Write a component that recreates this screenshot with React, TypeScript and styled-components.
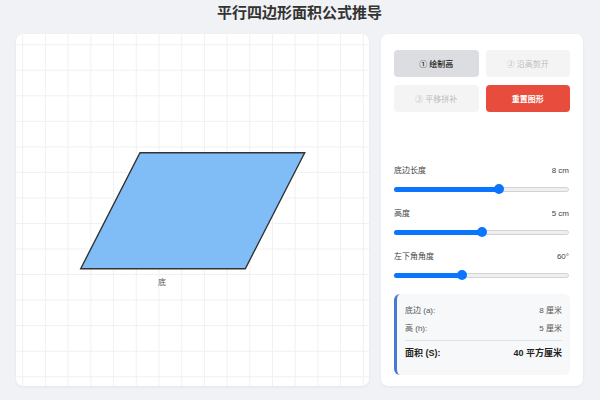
import React from "react";
import styled, { createGlobalStyle } from "styled-components";

const Global = createGlobalStyle`
  html, body { margin: 0; padding: 0; background: #f0f2f5; }
  body { font-family: "Liberation Sans", "Noto Sans CJK SC", sans-serif; }
  * { box-sizing: border-box; }
`;

const Page = styled.div`
  width: 600px;
  height: 400px;
  padding: 3px 17px 0 16px;
  display: flex;
  flex-direction: column;
`;

const Title = styled.h1`
  margin: 0 0 11px;
  height: 20px;
  line-height: 19px;
  font-size: 15px;
  font-weight: 700;
  color: #333;
  text-align: center;
`;

const Main = styled.div`
  display: flex;
  gap: 12px;
  height: 352px;
`;

const CanvasCard = styled.div`
  width: 353px;
  height: 352px;
  background: #fff;
  border-radius: 7px;
  box-shadow: 0 1px 3px rgba(0, 0, 0, 0.06);
  overflow: hidden;
`;

const Panel = styled.div`
  width: 202px;
  background: #fff;
  border-radius: 7px;
  box-shadow: 0 1px 3px rgba(0, 0, 0, 0.06);
  padding: 16px 13px 11px;
  display: flex;
  flex-direction: column;
`;

const ButtonGrid = styled.div`
  display: grid;
  grid-template-columns: 1fr 1fr;
  column-gap: 7px;
  row-gap: 8px;
`;

type Variant = "active" | "disabled" | "danger";

const StepButton = styled.button<{ $variant: Variant }>`
  height: 27px;
  border: none;
  border-radius: 4px;
  font-family: inherit;
  font-size: 8px;
  padding: 0;
  background: ${(p) =>
    p.$variant === "active" ? "#dcdde0" : p.$variant === "danger" ? "#e74c3c" : "#f4f4f5"};
  color: ${(p) =>
    p.$variant === "active" ? "#222" : p.$variant === "danger" ? "#fff" : "#bdbdc0"};
  font-weight: ${(p) => (p.$variant === "danger" ? 700 : p.$variant === "active" ? 500 : 400)};
`;

const Divider = styled.div`
  height: 1px;
  background: #ebecee;
  margin-top: 26px;
`;

const Sliders = styled.div`
  margin-top: 28px;
  display: flex;
  flex-direction: column;
  gap: 15px;
`;

const SliderGroup = styled.div`
  display: flex;
  flex-direction: column;
  gap: 8px;
`;

const SliderLabel = styled.div`
  display: flex;
  justify-content: space-between;
  font-size: 8px;
  line-height: 10px;
  color: #444;
  padding-right: 1px;
`;

const TrackBox = styled.div`
  position: relative;
  height: 10px;
  display: flex;
  align-items: center;
  padding-right: 1px;
`;

const Track = styled.div`
  position: relative;
  width: 100%;
  height: 5px;
  border-radius: 3px;
  background: #efeff0;
  border: 1px solid #d2d3d6;
`;

const Fill = styled.div`
  position: absolute;
  left: -1px;
  top: -1px;
  bottom: -1px;
  border-radius: 3px;
  background: #0a75ff;
`;

const Thumb = styled.div`
  position: absolute;
  top: 50%;
  width: 10px;
  height: 10px;
  margin: -5px 0 0 -5px;
  border-radius: 50%;
  background: #0a75ff;
`;

const Results = styled.div`
  margin-top: 14px;
  background: #f7f8fa;
  border-left: 3px solid #4a7bd3;
  border-radius: 6px;
  padding: 11px 8px 16px;
  display: flex;
  flex-direction: column;
`;

const ResultRow = styled.div<{ $total?: boolean }>`
  display: flex;
  justify-content: space-between;
  font-size: ${(p) => (p.$total ? "9px" : "8px")};
  line-height: 12px;
  color: ${(p) => (p.$total ? "#222" : "#555")};
  font-weight: ${(p) => (p.$total ? 700 : 400)};
  margin-top: ${(p) => (p.$total ? "6px" : "0")};
  & + & {
    margin-top: 6px;
  }
`;

const ResultDivider = styled.div`
  height: 1px;
  background: #e2e3e6;
  margin-top: 5px;
`;

const W = 353;
const H = 352;
const vLines = Array.from({ length: 16 }, (_, k) => 6.7 + 22.71 * k);
const hLines = Array.from({ length: 14 }, (_, k) => 10.7 + 25.54 * k);

const sliders = [
  { label: "底边长度", value: "8 cm", p: 0.599 },
  { label: "高度", value: "5 cm", p: 0.505 },
  { label: "左下角角度", value: "60°", p: 0.388 },
];

export default function App() {
  return (
    <>
      <Global />
      <Page>
        <Title>平行四边形面积公式推导</Title>
        <Main>
          <CanvasCard>
            <svg width={W} height={H} viewBox={`0 0 ${W} ${H}`}>
              {vLines.map((x) => (
                <line key={"v" + x} x1={x} y1={0} x2={x} y2={H} stroke="#f1f1f2" strokeWidth={1} />
              ))}
              {hLines.map((y) => (
                <line key={"h" + y} x1={0} y1={y} x2={W} y2={y} stroke="#f1f1f2" strokeWidth={1} />
              ))}
              <polygon
                points="124,118.7 288.7,118.7 229.3,234.7 64.7,234.7"
                fill="#80bdf6"
                stroke="#333"
                strokeWidth={1.4}
                strokeLinejoin="miter"
              />
              <text
                x={146}
                y={250.5}
                fontSize={8}
                fill="#555"
                textAnchor="middle"
                fontFamily='"Liberation Sans", "Noto Sans CJK SC", sans-serif'
              >
                底
              </text>
            </svg>
          </CanvasCard>
          <Panel>
            <ButtonGrid>
              <StepButton $variant="active">① 绘制高</StepButton>
              <StepButton $variant="disabled">② 沿高剪开</StepButton>
              <StepButton $variant="disabled">③ 平移拼补</StepButton>
              <StepButton $variant="danger">重置图形</StepButton>
            </ButtonGrid>
            <Divider />
            <Sliders>
              {sliders.map((s) => (
                <SliderGroup key={s.label}>
                  <SliderLabel>
                    <span>{s.label}</span>
                    <span>{s.value}</span>
                  </SliderLabel>
                  <TrackBox>
                    <Track>
                      <Fill style={{ width: `calc(${s.p * 100}% + 1px)` }} />
                      <Thumb style={{ left: `${s.p * 100}%` }} />
                    </Track>
                  </TrackBox>
                </SliderGroup>
              ))}
            </Sliders>
            <Results>
              <ResultRow>
                <span>底边 (a):</span>
                <span>8 厘米</span>
              </ResultRow>
              <ResultRow>
                <span>高 (h):</span>
                <span>5 厘米</span>
              </ResultRow>
              <ResultDivider />
              <ResultRow $total>
                <span>面积 (S):</span>
                <span>40 平方厘米</span>
              </ResultRow>
            </Results>
          </Panel>
        </Main>
      </Page>
    </>
  );
}
